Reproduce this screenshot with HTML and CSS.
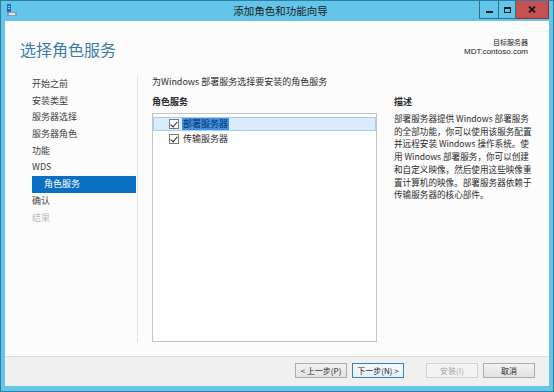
FILE: index.html
```html
<!DOCTYPE html>
<html lang="zh-CN">
<head>
  <meta charset="UTF-8" />
  <title>添加角色和功能向导</title>
  <link rel="stylesheet" href="styles.css">
</head>
<body>
  <div class="window">
    <div class="titlebar">
      <div class="title-left">
        <svg class="app-icon" width="12" height="12" viewBox="0 0 12 12">
          <rect x="1" y="0" width="4" height="9" fill="#1d6fb8"/>
          <rect x="2" y="2" width="2" height="1" fill="#9cd0f2"/>
          <rect x="2" y="4" width="2" height="1" fill="#9cd0f2"/>
          <path d="M1 8 L11 8 L11 12 L1 12 Z" fill="#8a9aa6"/>
          <path d="M3 9 L9 9 L9 11 L3 11 Z" fill="#dfe6ea"/>
        </svg>
      </div>
      <div class="title">添加角色和功能向导</div>
      <div class="caption-buttons">
        <div class="cap cap-min"><span class="min-glyph"></span></div>
        <div class="cap cap-max"><span class="max-glyph"></span></div>
        <div class="cap cap-close">
          <svg width="8" height="7" viewBox="0 0 8 7">
            <path d="M1 0.5 L7 6.5 M7 0.5 L1 6.5" stroke="#1a1a1a" stroke-width="1.8"/>
          </svg>
        </div>
      </div>
    </div>

    <div class="client">
      <div class="header">
        <h1>选择角色服务</h1>
        <div class="target">
          <div class="target-label">目标服务器</div>
          <div class="target-name">MDT.contoso.com</div>
        </div>
      </div>

      <div class="body">
        <ul class="nav">
          <li>开始之前</li>
          <li>安装类型</li>
          <li>服务器选择</li>
          <li>服务器角色</li>
          <li>功能</li>
          <li>WDS</li>
          <li class="sub selected">角色服务</li>
          <li>确认</li>
          <li class="disabled">结果</li>
        </ul>

        <div class="content">
          <p class="intro">为Windows 部署服务选择要安装的角色服务</p>
          <div class="columns">
            <div class="services">
              <div class="label">角色服务</div>
              <div class="listbox">
                <div class="row active">
                  <span class="checkbox checked"></span>
                  <span class="row-text highlight">部署服务器</span>
                </div>
                <div class="row">
                  <span class="checkbox checked"></span>
                  <span class="row-text">传输服务器</span>
                </div>
              </div>
            </div>
            <div class="desc">
              <div class="label">描述</div>
              <p>部署服务器提供 Windows 部署服务<br>的全部功能，你可以使用该服务配置<br>并远程安装 Windows 操作系统。使<br>用 Windows 部署服务，你可以创建<br>和自定义映像，然后使用这些映像重<br>置计算机的映像。部署服务器依赖于<br>传输服务器的核心部件。</p>
            </div>
          </div>
        </div>
      </div>

      <div class="footer">
        <button class="btn">&lt; 上一步(P)</button>
        <button class="btn focused">下一步(N) &gt;</button>
        <button class="btn disabled install">安装(I)</button>
        <button class="btn">取消</button>
      </div>
    </div>
  </div>
</body>
</html>
```

FILE: styles.css
```css
* {
  margin: 0;
  padding: 0;
  box-sizing: border-box;
}

body {
  font-family: "Noto Sans CJK SC", "Liberation Sans", sans-serif;
  background: #ffffff;
  width: 554px;
  height: 392px;
  overflow: hidden;
}

.window {
  width: 554px;
  height: 392px;
  background: #62c5e9;
  border: 1px solid #2f809f;
  display: flex;
  flex-direction: column;
}

/* Title bar */
.titlebar {
  height: 20px;
  display: grid;
  grid-template-columns: 1fr auto 1fr;
  align-items: start;
}

.title-left {
  padding: 3px 0 0 5px;
}

.app-icon {
  display: block;
}

.title {
  font-size: 10.5px;
  line-height: 19px;
  color: #1b1b1b;
  padding-left: 7px;
}

.caption-buttons {
  display: flex;
  justify-content: flex-end;
  padding-right: 4px;
}

.cap {
  height: 18px;
  border: 1px solid #2f6f88;
  border-top: none;
  display: flex;
  align-items: center;
  justify-content: center;
}

.cap-min {
  width: 20px;
}

.cap-max {
  width: 17px;
  border-left: none;
}

.cap-close {
  width: 33px;
  border-left: none;
  background: #c75050;
  border-color: #8a3030;
}

.min-glyph {
  width: 7px;
  height: 2px;
  background: #1a1a1a;
  margin-top: 5px;
}

.max-glyph {
  width: 7px;
  height: 6px;
  border: 1px solid #1a1a1a;
  border-top-width: 2px;
}

/* Client area */
.client {
  flex: 1;
  margin: 0 4px 5px 4px;
  background: #fcfcfc;
  display: flex;
  flex-direction: column;
}

.header {
  height: 54px;
  display: flex;
  justify-content: space-between;
  align-items: flex-start;
  padding: 0 21px 0 15px;
}

h1 {
  font-size: 16px;
  font-weight: 400;
  line-height: 20px;
  color: #3a7ca5;
  margin-top: 18px;
}

.target {
  margin-top: 17px;
  text-align: right;
  color: #222;
}

.target-label {
  font-size: 7px;
  line-height: 9px;
}

.target-name {
  font-family: "Liberation Sans", sans-serif;
  font-size: 8px;
  line-height: 9px;
}

.body {
  flex: 1;
  display: flex;
  padding-bottom: 14px;
}

/* Left navigation */
.nav {
  width: 133px;
  list-style: none;
  padding: 1px 1px 0 27px;
  border-right: 1px solid #e2e2e2;
}

.nav li {
  height: 16.7px;
  font-size: 9px;
  line-height: 16.7px;
  color: #3e3e3e;
}

.nav li.sub {
  padding-left: 12px;
}

.nav li.selected {
  background: #0b6fc1;
  color: #ffffff;
}

.nav li.disabled {
  color: #b8b8b8;
}

/* Main content */
.content {
  flex: 1;
  padding-left: 14px;
  color: #2b2b2b;
}

.intro {
  font-size: 9px;
  line-height: 14px;
}

.columns {
  display: flex;
  gap: 17px;
  margin-top: 6px;
}

.label {
  font-size: 9px;
  font-weight: 700;
  line-height: 14px;
}

.services .label {
  margin-bottom: 4px;
}

.listbox {
  width: 225px;
  height: 229px;
  background: #ffffff;
  border: 1px solid #c4c4c4;
  padding-top: 3px;
}

.row {
  height: 14px;
  margin-bottom: 1px;
  display: flex;
  align-items: center;
  gap: 3px;
  padding-left: 15px;
  border: 1px solid transparent;
  font-size: 9px;
}

.row.active {
  background: #dcebfb;
  border-color: #a7cdf1;
}

.checkbox {
  width: 10px;
  height: 10px;
  border: 1px solid #7a7a7a;
  background: #ffffff;
  position: relative;
}

.checkbox.checked::after {
  content: "";
  position: absolute;
  left: 2px;
  top: 0px;
  width: 3px;
  height: 6px;
  border: solid #222;
  border-width: 0 1.5px 1.5px 0;
  transform: rotate(40deg);
}

.row-text {
  line-height: 12px;
  padding: 0 1px;
}

.row-text.highlight {
  background: #3d92e4;
  color: #10305e;
}

.desc {
  width: 136px;
}

.desc p {
  margin-top: 3px;
  font-size: 8.6px;
  line-height: 12.7px;
  color: #2b2b2b;
  white-space: nowrap;
}

/* Footer buttons */
.footer {
  height: 30px;
  border-top: 1px solid #dedede;
  background: #f0f0f0;
  display: flex;
  justify-content: flex-end;
  align-items: flex-start;
  padding: 6px 14px 0 0;
  gap: 5px;
}

.btn {
  width: 52px;
  height: 15px;
  font-family: inherit;
  font-size: 8px;
  line-height: 13px;
  color: #1e1e1e;
  background: linear-gradient(#f2f2f2, #e2e2e2);
  border: 1px solid #acacac;
}

.btn.focused {
  background: linear-gradient(#f4f9fd, #e6f0f9);
  border-color: #3c7fb1;
}

.btn.disabled {
  color: #a3a3a3;
  background: #f4f4f4;
  border-color: #d2d2d2;
}

.btn.install {
  margin-left: 17px;
}
```
